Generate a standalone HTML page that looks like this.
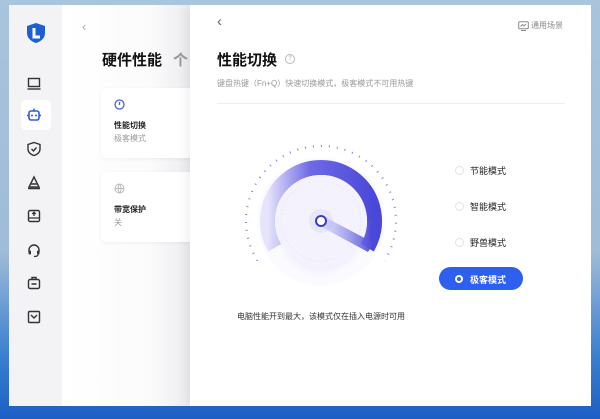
<!DOCTYPE html>
<html><head><meta charset="utf-8"><style>
*{margin:0;padding:0;box-sizing:border-box}
body{width:600px;height:419px;overflow:hidden;font-family:"Liberation Sans","Noto Sans CJK SC",sans-serif;background:linear-gradient(180deg,#a9c4dc 0%,#9fbcd8 60%,#3b7fd0 85%,#1d5fc4 100%);position:relative}
.win{position:absolute;left:9px;top:5px;width:582px;height:401px;background:#fff;overflow:hidden}
.side{position:absolute;left:0;top:0;width:53px;height:401px;background:#f3f3f5}
.mid{position:absolute;left:53px;top:0;width:128px;height:401px;background:linear-gradient(90deg,#fff 0%,#fbfbfc 70%,#ececef 100%)}
.right{position:absolute;left:181px;top:0;width:401px;height:401px;background:#fff;box-shadow:-4px 0 10px rgba(0,0,0,.06)}
.ic{position:absolute;left:17px;width:16px;height:16px}
.card{position:absolute;left:92px;width:100px;height:70px;background:#fff;border-radius:5px;box-shadow:0 1px 4px rgba(0,0,0,.06)}
.t{position:absolute;white-space:nowrap}
.radio{position:absolute;left:446px;width:9px;height:9px;border:1px solid #e3e3e8;border-radius:50%}
</style></head><body>
<div class="win">
<div class="side">
<svg style="position:absolute;left:17px;top:17px" width="20" height="22" viewBox="0 0 20 22"><path d="M10 1 L19 4 V11 C19 16 15 19.5 10 21 C5 19.5 1 16 1 11 V4 Z" fill="#1e5fd6"/><path d="M8 6 V15 H14" stroke="#fff" stroke-width="3" fill="none"/></svg>
<svg class="ic" style="top:71px" viewBox="0 0 16 16"><rect x="2.5" y="2.5" width="11" height="8" fill="none" stroke="#333" stroke-width="1.4"/><path d="M1.5 13h13" stroke="#333" stroke-width="1.4"/></svg>
<div style="position:absolute;left:12px;top:95px;width:30px;height:30px;background:#fff;border-radius:5px"></div>
<svg class="ic" style="top:102px" viewBox="0 0 16 16"><rect x="3" y="4" width="10" height="9" rx="2" fill="none" stroke="#2b5de3" stroke-width="1.6"/><path d="M8 1.5v2.5M1 8.5h2M13 8.5h2" stroke="#2b5de3" stroke-width="1.5"/><circle cx="6" cy="8.5" r="1" fill="#2b5de3"/><circle cx="10" cy="8.5" r="1" fill="#2b5de3"/></svg>
<svg class="ic" style="top:136px" viewBox="0 0 16 16"><path d="M8 1.5 L14 3.5 V8 C14 11.5 11 13.5 8 14.5 C5 13.5 2 11.5 2 8 V3.5 Z" fill="none" stroke="#333" stroke-width="1.4"/><path d="M5.5 8l2 2 3-3.5" fill="none" stroke="#333" stroke-width="1.4"/></svg>
<svg class="ic" style="top:170px" viewBox="0 0 16 16"><path d="M8 2 L13 12 H3 Z" fill="none" stroke="#333" stroke-width="1.4"/><path d="M2 13.5h12M5 9h6" stroke="#333" stroke-width="1.4"/></svg>
<svg class="ic" style="top:203px" viewBox="0 0 16 16"><rect x="2.5" y="2.5" width="11" height="11" rx="1.5" fill="none" stroke="#333" stroke-width="1.4"/><path d="M2.5 10h11M8 4.5v3.5M6.3 6l1.7-1.7 1.7 1.7" fill="none" stroke="#333" stroke-width="1.3"/></svg>
<svg class="ic" style="top:237px" viewBox="0 0 16 16"><path d="M3 10V8a5 5 0 0 1 10 0v2" fill="none" stroke="#333" stroke-width="1.4"/><rect x="2.5" y="8.5" width="2.5" height="4" rx="1" fill="#333"/><rect x="11" y="8.5" width="2.5" height="4" rx="1" fill="#333"/><path d="M12 12.5c0 1.5-2 2-4 2" fill="none" stroke="#333" stroke-width="1.3"/></svg>
<svg class="ic" style="top:270px" viewBox="0 0 16 16"><rect x="2.5" y="4.5" width="11" height="9" rx="1.5" fill="none" stroke="#333" stroke-width="1.4"/><path d="M6 4.5V2.5h4v2M5.5 9h5" fill="none" stroke="#333" stroke-width="1.4"/></svg>
<svg class="ic" style="top:304px" viewBox="0 0 16 16"><rect x="2.5" y="2.5" width="11" height="11" rx="1" fill="none" stroke="#333" stroke-width="1.4"/><path d="M5 6l3 3 3-3" fill="none" stroke="#333" stroke-width="1.4"/></svg>
</div>
<div class="mid">
<div class="t" style="left:20px;top:14px;color:#aaa;font-size:13px">‹</div>
</div>
<div class="t" style="left:93px;top:44px;font-size:15px;font-weight:bold;color:#111">硬件性能</div>
<div class="t" style="left:164px;top:44px;font-size:15px;font-weight:bold;color:#999">个</div>
<div class="card" style="top:83px">
<svg style="position:absolute;left:13px;top:11px" width="11" height="11" viewBox="0 0 11 11"><circle cx="5.5" cy="5.5" r="4.5" fill="none" stroke="#3a63e6" stroke-width="1.3"/><path d="M5.5 3v3" stroke="#3a63e6" stroke-width="1.3"/></svg>
<div class="t" style="left:13px;top:32px;font-size:8px;font-weight:bold;color:#222">性能切换</div>
<div class="t" style="left:13px;top:45px;font-size:8px;color:#999">极客模式</div>
</div>
<div class="card" style="top:167px">
<svg style="position:absolute;left:13px;top:11px" width="11" height="11" viewBox="0 0 11 11"><circle cx="5.5" cy="5.5" r="4.5" fill="none" stroke="#bbb" stroke-width="1"/><path d="M1 5.5h9M5.5 1c-2 2.5-2 6.5 0 9M5.5 1c2 2.5 2 6.5 0 9" fill="none" stroke="#bbb" stroke-width=".9"/></svg>
<div class="t" style="left:13px;top:32px;font-size:8px;font-weight:bold;color:#222">带宽保护</div>
<div class="t" style="left:13px;top:45px;font-size:8px;color:#999">关</div>
</div>
<div class="right">
<div class="t" style="left:27px;top:8px;color:#666;font-size:15px">‹</div>
<svg style="position:absolute;left:328px;top:16px" width="11" height="10" viewBox="0 0 11 10"><rect x=".7" y=".7" width="9.6" height="7" rx="1" fill="none" stroke="#888" stroke-width="1"/><path d="M2.5 5.5l2-2 1.5 1.5 2-2M3 9.5h5" fill="none" stroke="#888" stroke-width=".9"/></svg>
<div class="t" style="left:341px;top:15px;font-size:8px;color:#888">通用场景</div>
<div class="t" style="left:27px;top:44px;font-size:15px;font-weight:bold;color:#111">性能切换</div>
<div style="position:absolute;left:95px;top:49px;width:10px;height:10px;border:1px solid #bbb;border-radius:50%;font-size:6px;color:#aaa;text-align:center;line-height:8px">?</div>
<div class="t" style="left:27px;top:73px;font-size:8px;color:#999">键盘热键（Fn+Q）快速切换模式，极客模式不可用热键</div>
<div style="position:absolute;left:27px;top:98px;width:348px;height:1px;background:#eee"></div>
</div>
<svg style="position:absolute;left:211px;top:126px" width="200" height="190" viewBox="211 126 200 190">
<defs>
<linearGradient id="ag" x1="0" y1="0" x2="1" y2="0"><stop offset="0" stop-color="#e6e4fb"/><stop offset=".4" stop-color="#6f69e6"/><stop offset="1" stop-color="#4a48d8"/></linearGradient>
<radialGradient id="glow" cx=".5" cy=".5" r=".5"><stop offset=".7" stop-color="#d9d6fb"/><stop offset="1" stop-color="#fff" stop-opacity="0"/></radialGradient>
<linearGradient id="nd" x1="0" y1="0" x2="1" y2="0"><stop offset="0" stop-color="#c9c6f6" stop-opacity=".4"/><stop offset="1" stop-color="#4b48d9"/></linearGradient>
</defs>
<circle cx="312" cy="227" r="58" fill="url(#glow)" opacity=".8"/>
<circle cx="312" cy="216" r="64" fill="#fafaff"/>
<path d="M265.7 242.75 A53.5 53.5 0 1 1 358.3 242.75" fill="none" stroke="url(#ag)" stroke-width="15"/>
<path d="M248.4 255.7 A75 75 0 1 1 375.6 255.7" fill="none" stroke="#8b7ff0" stroke-width="2.2" pathLength="296" style="stroke-dasharray:.9 6.5"/>
<circle cx="312" cy="227" r="50" fill="url(#glow)" opacity=".35"/>
<circle cx="312" cy="216" r="46" fill="#f4f3fd"/>
<circle cx="312" cy="216" r="40" fill="none" stroke="#dcdaf5" stroke-width=".8" stroke-dasharray="1 3"/>
<circle cx="312" cy="216" r="12" fill="#e8e6fb"/>
<path d="M314 211 L365 238 L359 247 L309 220 Z" fill="url(#nd)"/>
<circle cx="312" cy="216" r="5" fill="#fff" stroke="#3d3ad0" stroke-width="2"/>
</svg>
<div class="radio" style="top:161px"></div><div class="t" style="left:461px;top:159px;font-size:9px;color:#222">节能模式</div>
<div class="radio" style="top:197px"></div><div class="t" style="left:461px;top:195px;font-size:9px;color:#222">智能模式</div>
<div class="radio" style="top:233px"></div><div class="t" style="left:461px;top:231px;font-size:9px;color:#222">野兽模式</div>
<div style="position:absolute;left:430px;top:262px;width:84px;height:23px;background:#2f5ff0;border-radius:12px"></div>
<div style="position:absolute;left:446px;top:270px;width:8px;height:8px;border:2px solid #fff;border-radius:50%"></div>
<div class="t" style="left:461px;top:268px;font-size:9px;font-weight:bold;color:#fff">极客模式</div>
<div class="t" style="left:228px;top:306px;font-size:8px;color:#333">电脑性能开到最大，该模式仅在插入电源时可用</div>
</div>
</body></html>
